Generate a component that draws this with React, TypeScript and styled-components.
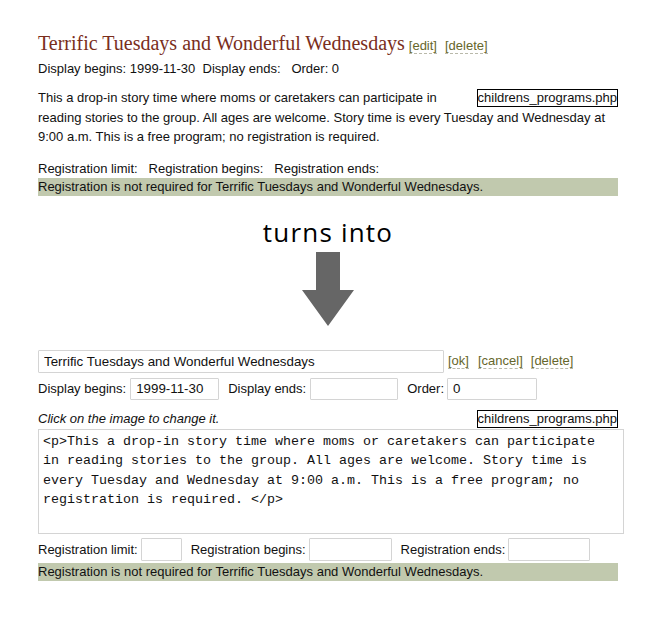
import React from "react"
import styled, { createGlobalStyle } from "styled-components"

const GlobalStyle = createGlobalStyle`
  body {
    margin: 0;
    background: #ffffff;
    font-family: "Liberation Sans", Arial, sans-serif;
    font-size: 13px;
    color: #111111;
  }
`

const Page = styled.div`
  width: 656px;
  height: 618px;
  padding: 31px 0 0 38px;
  box-sizing: border-box;
`

const Block = styled.div`
  width: 580px;
`

const TitleRow = styled.div`
  display: flex;
  align-items: baseline;
  height: 24px;
`

const Title = styled.h2`
  margin: 0 4px 0 0;
  font-family: "Liberation Serif", "Times New Roman", serif;
  font-weight: normal;
  font-size: 20px;
  line-height: 24px;
  color: #7a2e1c;
`

const Action = styled.a<{ $gap?: number }>`
  color: #66662b;
  font-size: 13px;
  line-height: 14px;
  text-decoration: none;
  border-bottom: 1px dashed #b9b9aa;
  margin-left: ${(p) => p.$gap ?? 0}px;
  cursor: pointer;
`

const Meta = styled.div`
  margin-top: 6px;
  line-height: 16px;
  white-space: pre;
`

const DescWrap = styled.div`
  margin-top: 11px;
  line-height: 19.5px;
`

const FileTag = styled.span`
  float: right;
  border: 1px solid #000;
  padding: 0;
  line-height: 16px;
  margin: 1px 0 0 8px;
`

const RegLine = styled.div`
  margin-top: 14px;
  line-height: 16px;
  white-space: pre;
`

const Notice = styled.div<{ $top: number }>`
  margin-top: ${(p) => p.$top}px;
  background: #c1c9ae;
  height: 18px;
  line-height: 18px;
`

const Between = styled.div`
  display: flex;
  flex-direction: column;
  align-items: center;
  width: 580px;
  padding-top: 19px;
`

const TurnsInto = styled.div`
  font-family: "Open Sans", "Noto Sans", sans-serif;
  font-size: 26px;
  letter-spacing: 1.2px;
  line-height: 34px;
  color: #000;
`

const ArrowBox = styled.svg`
  display: block;
  margin-top: 3px;
`

const EditRow = styled.div<{ $top: number; $h: number }>`
  display: flex;
  align-items: center;
  margin-top: ${(p) => p.$top}px;
  height: ${(p) => p.$h}px;
`

const Field = styled.input<{ $w: number; $gap?: number }>`
  width: ${(p) => p.$w}px;
  height: 100%;
  box-sizing: border-box;
  border: 1px solid #d4d4d4;
  border-radius: 1px;
  padding: 0 5px;
  font-family: "Liberation Sans", Arial, sans-serif;
  font-size: 13.33px;
  color: #111;
  margin-right: ${(p) => p.$gap ?? 0}px;
  outline: none;
`

const Label = styled.span<{ $gap?: number }>`
  margin-right: ${(p) => p.$gap ?? 4}px;
  white-space: nowrap;
`

const Hint = styled.div`
  margin-top: 10px;
  display: flex;
  justify-content: space-between;
  align-items: center;
  height: 18px;
  font-style: italic;
`

const HintTag = styled.span`
  border: 1px solid #000;
  padding: 0;
  line-height: 16px;
  font-style: normal;
`

const Source = styled.textarea`
  display: block;
  width: 586px;
  height: 105px;
  box-sizing: border-box;
  border: 1px solid #d4d4d4;
  margin: 1px 0 0 0;
  padding: 2px 12px 0 4px;
  resize: none;
  overflow: hidden;
  font-family: "Liberation Mono", "Courier New", monospace;
  font-size: 13.33px;
  line-height: 19.6px;
  color: #111;
  outline: none;
`

const description =
  "This a drop-in story time where moms or caretakers can participate in reading stories to the group. All ages are welcome. Story time is every Tuesday and Wednesday at 9:00 a.m. This is a free program; no registration is required."

const notice = "Registration is not required for Terrific Tuesdays and Wonderful Wednesdays."

const App: React.FunctionComponent = () => {
  return (
    <>
      <GlobalStyle />
      <Page>
        <Block>
          <TitleRow>
            <Title>Terrific Tuesdays and Wonderful Wednesdays</Title>
            <Action>[edit]</Action>
            <Action $gap={8}>[delete]</Action>
          </TitleRow>
          <Meta>Display begins: 1999-11-30  Display ends:   Order: 0</Meta>
          <DescWrap>
            <FileTag>childrens_programs.php</FileTag>
            {description}
          </DescWrap>
          <RegLine>Registration limit:   Registration begins:   Registration ends:</RegLine>
          <Notice $top={1}>{notice}</Notice>
        </Block>

        <Between>
          <TurnsInto>turns into</TurnsInto>
          <ArrowBox width="54" height="75" viewBox="0 0 54 75">
            <polygon points="15,0 39,0 39,38 53,38 27,74 1,38 15,38" fill="#666666" />
          </ArrowBox>
        </Between>

        <Block>
          <EditRow $top={23} $h={23}>
            <Field $w={406} $gap={4} defaultValue="Terrific Tuesdays and Wonderful Wednesdays" />
            <Action>[ok]</Action>
            <Action $gap={9}>[cancel]</Action>
            <Action $gap={8}>[delete]</Action>
          </EditRow>
          <EditRow $top={5} $h={22}>
            <Label>Display begins:</Label>
            <Field $w={89} $gap={9} defaultValue="1999-11-30" />
            <Label>Display ends:</Label>
            <Field $w={88} $gap={9} />
            <Label $gap={3}>Order:</Label>
            <Field $w={90} defaultValue="0" />
          </EditRow>
          <Hint>
            <span>Click on the image to change it.</span>
            <HintTag>childrens_programs.php</HintTag>
          </Hint>
          <Source defaultValue={"<p>" + description + " </p>"} />
          <EditRow $top={4} $h={23}>
            <Label $gap={3}>Registration limit:</Label>
            <Field $w={41} $gap={9} />
            <Label $gap={3}>Registration begins:</Label>
            <Field $w={83} $gap={9} />
            <Label $gap={3}>Registration ends:</Label>
            <Field $w={82} />
          </EditRow>
          <Notice $top={2}>{notice}</Notice>
        </Block>
      </Page>
    </>
  )
}

export default App
